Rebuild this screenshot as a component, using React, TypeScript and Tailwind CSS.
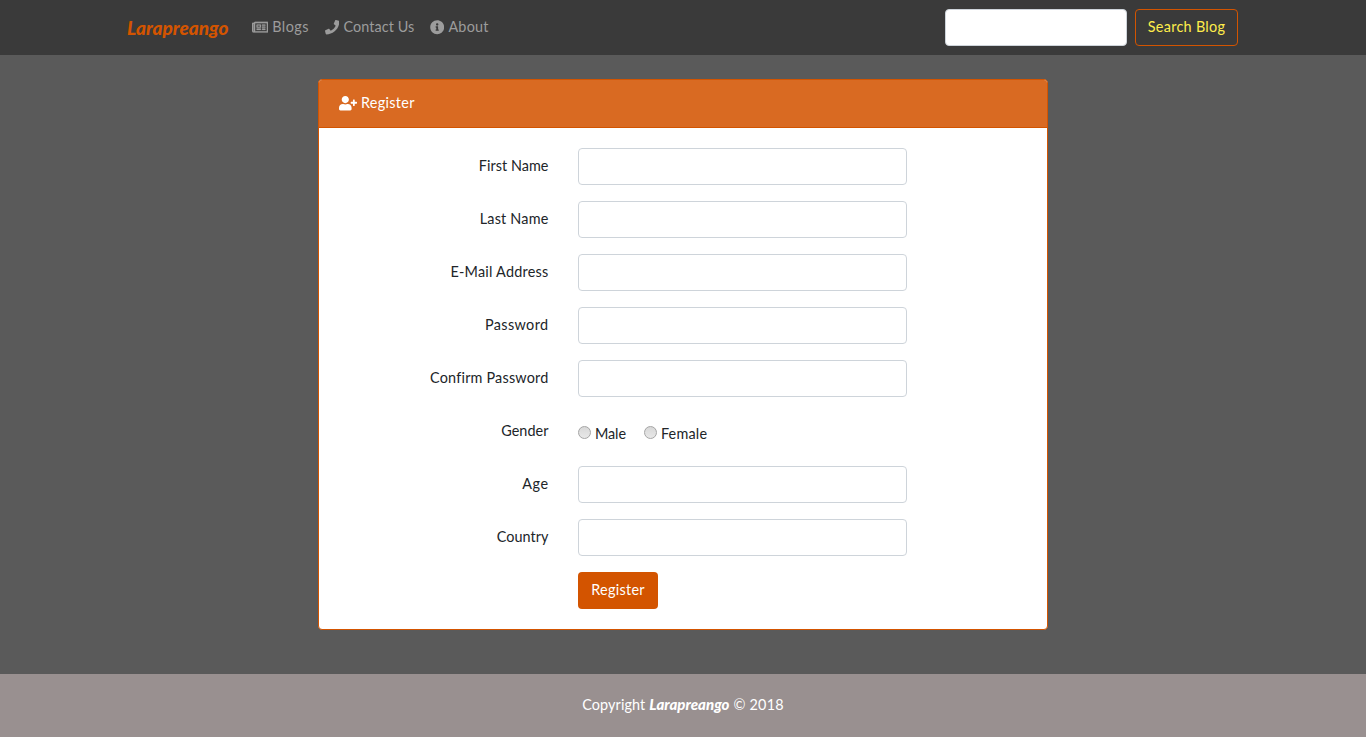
import { FaInfoCircle, FaPhone, FaRegNewspaper, FaUserPlus } from 'react-icons/fa';

const inputClass = 'h-[37px] w-full rounded border border-[#ced4da] bg-white px-3 outline-none';

const before = [
  { label: 'First Name', type: 'text', tracking: 'tracking-[0.05px]' },
  { label: 'Last Name', type: 'text', tracking: 'tracking-[0.2px]' },
  { label: 'E-Mail Address', type: 'email', tracking: 'tracking-[0.24px]' },
  { label: 'Password', type: 'password', tracking: 'tracking-[0.4px]' },
  { label: 'Confirm Password', type: 'password', tracking: 'tracking-[0.2px]' },
];

const after = [
  { label: 'Age', type: 'text', tracking: 'tracking-[0.5px]' },
  { label: 'Country', type: 'text', tracking: 'tracking-[0.05px]' },
];

function Field({ label, type, tracking }: { label: string; type: string; tracking: string }) {
  return (
    <label className="flex h-[37px]">
      <span className={`w-[229.5px] pt-[6px] text-right ${tracking}`}>{label}</span>
      <span className="ml-[29.5px] w-[329px]">
        <input type={type} className={inputClass} />
      </span>
    </label>
  );
}

function Radio({ label, tracking }: { label: string; tracking: string }) {
  return (
    <label className={`flex items-center ${tracking}`}>
      <input
        type="radio"
        name="gender"
        className="-mt-[3px] mr-1 size-[13px] appearance-none rounded-full border border-[#a5a5a5] bg-linear-to-b from-[#d8d8d8] to-[#e8e8e8]"
      />
      {label}
    </label>
  );
}

export default function App() {
  return (
    <div className="flex h-[737px] flex-col bg-[#5a5a5a] font-['Lato',sans-serif] text-[14.4px] leading-[23px] text-[#212529]">
      <nav className="flex h-[55px] shrink-0 items-center bg-[#3a3a3a] pr-32 pl-[127px] text-[#9c9c9c]">
        <a className="w-[125px] text-[19px] font-black text-[#d35400] italic">Larapreango</a>
        <a className="flex w-[73px] items-center gap-1">
          <FaRegNewspaper className="h-[14.4px] w-[16.2px] stroke-current stroke-[8]" />
          <span className="pb-0.5 tracking-[0.45px]">Blogs</span>
        </a>
        <a className="flex w-[105px] items-center gap-1">
          <FaPhone className="size-[14.4px]" />
          <span className="pb-0.5 tracking-[0.1px]">Contact Us</span>
        </a>
        <a className="flex items-center gap-1">
          <FaInfoCircle className="size-[14.4px]" />
          <span className="pb-0.5 tracking-[0.25px]">About</span>
        </a>
        <form className="ml-auto flex gap-2">
          <input className="h-[37px] w-[182px] rounded border border-[#ced4da] bg-white px-3 outline-none" />
          <button
            type="button"
            className="h-[37px] w-[103px] rounded border border-[#d35400] pb-0.5 tracking-[0.3px] text-[#ffed4a]"
          >
            Search Blog
          </button>
        </form>
      </nav>
      <main className="flex flex-1 justify-center pt-6">
        <section className="h-[551px] w-[730px] overflow-hidden rounded border border-[#d35400] bg-white">
          <header className="flex h-12 items-center gap-1 border-b border-[#d35400] bg-[#d96a22] pl-5 text-white">
            <FaUserPlus className="h-[14.4px] w-[18px]" />
            <span className="pb-0.5 tracking-[0.3px]">Register</span>
          </header>
          <form className="flex flex-col gap-4 pt-5">
            {before.map((f) => (
              <Field key={f.label} {...f} />
            ))}
            <div className="flex h-[37px]">
              <span className="w-[229.5px] pt-[6px] text-right tracking-[0.05px]">Gender</span>
              <div className="ml-[29.5px] flex gap-[18px] pt-1">
                <Radio label="Male" tracking="tracking-[-0.1px]" />
                <Radio label="Female" tracking="tracking-[0.2px]" />
              </div>
            </div>
            {after.map((f) => (
              <Field key={f.label} {...f} />
            ))}
            <button
              type="button"
              className="ml-[259px] h-[37px] w-20 rounded bg-[#d35400] pb-0.5 tracking-[0.3px] text-white"
            >
              Register
            </button>
          </form>
        </section>
      </main>
      <footer className="flex h-[63px] shrink-0 items-center justify-center gap-1 bg-[#999090] pb-0.5 text-white">
        <span className="tracking-[0.1px]">Copyright</span>
        <span className="text-[15px] font-black italic">Larapreango</span>
        <span className="tracking-[0.2px]">© 2018</span>
      </footer>
    </div>
  );
}
